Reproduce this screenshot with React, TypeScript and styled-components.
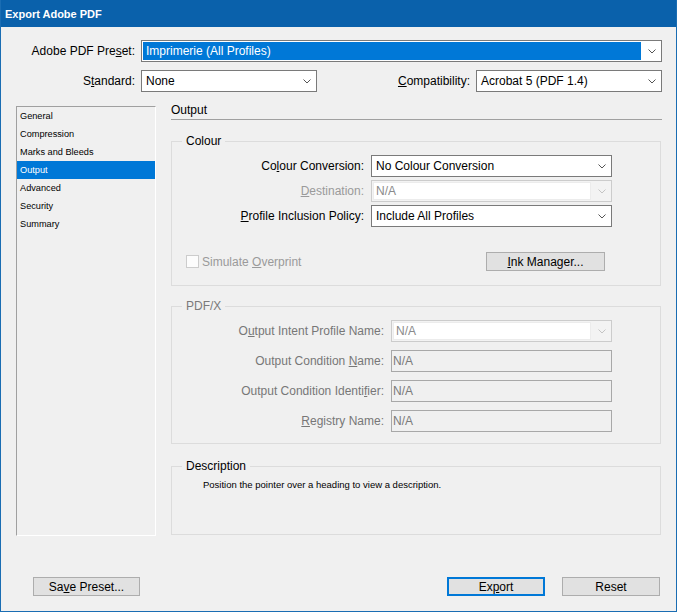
import styled, { createGlobalStyle } from 'styled-components';

const GlobalStyle = createGlobalStyle`
  html, body {
    margin: 0;
    padding: 0;
    background: #f0f0f0;
  }
  body {
    font-family: 'Liberation Sans', Arial, sans-serif;
    font-size: 12px;
    color: #000;
  }
  * {
    box-sizing: border-box;
  }
`;

const Window = styled.div`
  width: 677px;
  height: 612px;
  display: flex;
  flex-direction: column;
  background: #f0f0f0;
  border: 1px solid #1a6db3;
  border-top: none;
  overflow: hidden;
`;

const TitleBar = styled.div`
  height: 27px;
  flex: none;
  display: flex;
  align-items: center;
  padding-left: 4px;
  background: #0a61ab;
  color: #fff;
  font-size: 11px;
  font-weight: bold;
`;

const Body = styled.div`
  flex: 1;
  display: flex;
  flex-direction: column;
  padding: 13px 14px 0 0;
`;

const Row = styled.div<{ $top?: number }>`
  display: flex;
  align-items: center;
  height: 22px;
  margin-top: ${(p) => p.$top ?? 0}px;
`;

const Label = styled.span<{ $width?: number; $tone?: string; $gap?: number }>`
  flex: none;
  width: ${(p) => (p.$width ? `${p.$width}px` : 'auto')};
  margin-left: ${(p) => (p.$width ? '0' : 'auto')};
  margin-right: ${(p) => p.$gap ?? 6}px;
  text-align: right;
  white-space: nowrap;
  color: ${(p) => p.$tone ?? '#000'};
`;

const U = styled.span`
  text-decoration: underline;
  text-underline-offset: 1px;
`;

const ComboBox = styled.div<{ $width?: number; $disabled?: boolean }>`
  display: flex;
  align-items: stretch;
  height: 22px;
  flex: ${(p) => (p.$width ? 'none' : '1')};
  width: ${(p) => (p.$width ? `${p.$width}px` : 'auto')};
  border: 1px solid ${(p) => (p.$disabled ? '#cccccc' : '#7a7a7a')};
  background: ${(p) => (p.$disabled ? '#f3f3f3' : '#fff')};
`;

const ComboText = styled.div<{ $highlight?: boolean; $disabled?: boolean }>`
  flex: 1;
  display: flex;
  align-items: center;
  margin: 1px;
  padding-left: 2px;
  white-space: nowrap;
  background: ${(p) => (p.$highlight ? '#0078d7' : p.$disabled ? '#fff' : 'transparent')};
  color: ${(p) => (p.$highlight ? '#fff' : p.$disabled ? '#8a8a8a' : '#000')};
  border: 1px solid ${(p) => (p.$disabled ? '#ececec' : 'transparent')};
`;

const ChevronBox = styled.div`
  flex: none;
  width: 19px;
  display: flex;
  align-items: center;
  justify-content: center;
`;

const TextField = styled.div`
  width: 221px;
  height: 22px;
  display: flex;
  align-items: center;
  padding-left: 1px;
  border: 1px solid #a8a8a8;
  background: #f0f0f0;
  color: #7a7a7a;
`;

function Chevron({ disabled }: { disabled?: boolean }) {
  return (
    <svg width="8" height="5" viewBox="0 0 8 5">
      <path d="M0.5 0.5 L4 4 L7.5 0.5" fill="none" stroke={disabled ? '#c4c4c4' : '#555'} strokeWidth="1" />
    </svg>
  );
}

function Combo({
  value,
  width,
  highlight,
  disabled,
}: {
  value: string;
  width?: number;
  highlight?: boolean;
  disabled?: boolean;
}) {
  return (
    <ComboBox $width={width} $disabled={disabled}>
      <ComboText $highlight={highlight} $disabled={disabled}>
        {value}
      </ComboText>
      <ChevronBox>
        <Chevron disabled={disabled} />
      </ChevronBox>
    </ComboBox>
  );
}

const Main = styled.div`
  display: flex;
  align-items: flex-start;
  margin-top: 14px;
  padding-left: 15px;
`;

const NavList = styled.div`
  flex: none;
  width: 140px;
  height: 430px;
  border-top: 1px solid #a0a0a0;
  border-left: 1px solid #a0a0a0;
  border-right: 1px solid #fff;
  border-bottom: 1px solid #fff;
  font-size: 9.2px;
`;

const NavItem = styled.div<{ $selected?: boolean }>`
  height: 18px;
  line-height: 18px;
  padding-left: 3px;
  background: ${(p) => (p.$selected ? '#0078d7' : 'transparent')};
  color: ${(p) => (p.$selected ? '#fff' : '#000')};
`;

const Panel = styled.div`
  flex: 1;
  margin-left: 15px;
  margin-top: -3px;
`;

const PanelHeader = styled.div`
  height: 17px;
  line-height: 14px;
  border-bottom: 1px solid #a0a0a0;
`;

const Group = styled.fieldset<{ $top: number; $pad: string }>`
  margin: ${(p) => p.$top}px 1px 0 0;
  padding: ${(p) => p.$pad};
  min-width: 0;
  border: 1px solid #dcdcdc;
`;

const Legend = styled.legend<{ $tone?: string }>`
  margin-left: 10px;
  padding: 0 4px;
  line-height: 14px;
  font-size: 12px;
  color: ${(p) => p.$tone ?? '#000'};
`;

const FormRow = styled.div<{ $label: number; $gap?: number }>`
  display: grid;
  grid-template-columns: ${(p) => p.$label}px auto;
  column-gap: 7px;
  align-items: center;
  height: 22px;
  margin-top: ${(p) => p.$gap ?? 0}px;
  & > span {
    margin: 0;
  }
`;

const OptionsRow = styled.div`
  display: flex;
  align-items: center;
  justify-content: space-between;
  height: 19px;
  margin-top: 25px;
  padding: 0 55px 0 14px;
`;

const CheckLabel = styled.label`
  display: flex;
  align-items: center;
  gap: 3px;
  color: #9a9a9a;
`;

const CheckBox = styled.span`
  width: 13px;
  height: 13px;
  border: 1px solid #cccccc;
  background: #fcfcfc;
`;

const Button = styled.button<{ $width: number; $default?: boolean }>`
  width: ${(p) => p.$width}px;
  height: 19px;
  padding: 0;
  font-family: inherit;
  font-size: 12px;
  color: #000;
  background: #e1e1e1;
  border: ${(p) => (p.$default ? '2px solid #0078d7' : '1px solid #adadad')};
`;

const DescText = styled.div`
  padding-left: 31px;
  padding-top: 6px;
  font-size: 9.5px;
  line-height: 12px;
`;

const Footer = styled.div`
  display: flex;
  align-items: center;
  margin-top: 41px;
  padding: 0 2px 0 32px;
  gap: 17px;
  & > :nth-child(2) {
    margin-left: auto;
  }
`;

const navItems = ['General', 'Compression', 'Marks and Bleeds', 'Output', 'Advanced', 'Security', 'Summary'];

export default function App() {
  return (
    <>
      <GlobalStyle />
      <Window>
        <TitleBar>Export Adobe PDF</TitleBar>
        <Body>
          <Row>
            <Label $width={134}>
              Adobe PDF Pre<U>s</U>et:
            </Label>
            <Combo value="Imprimerie (All Profiles)" highlight />
          </Row>
          <Row $top={8}>
            <Label $width={134}>
              S<U>t</U>andard:
            </Label>
            <Combo value="None" width={176} />
            <Label>
              <U>C</U>ompatibility:
            </Label>
            <Combo value="Acrobat 5 (PDF 1.4)" width={186} />
          </Row>

          <Main>
            <NavList>
              {navItems.map((item) => (
                <NavItem key={item} $selected={item === 'Output'}>
                  {item}
                </NavItem>
              ))}
            </NavList>

            <Panel>
              <PanelHeader>Output</PanelHeader>

              <Group $top={14} $pad="7px 0 14px 0">
                <Legend>Colour</Legend>
                <FormRow $label={192}>
                  <Label>
                    Co<U>l</U>our Conversion:
                  </Label>
                  <Combo value="No Colour Conversion" width={241} />
                </FormRow>
                <FormRow $label={192} $gap={3}>
                  <Label $tone="#9a9a9a">
                    <U>D</U>estination:
                  </Label>
                  <Combo value="N/A" width={241} disabled />
                </FormRow>
                <FormRow $label={192} $gap={3}>
                  <Label>
                    <U>P</U>rofile Inclusion Policy:
                  </Label>
                  <Combo value="Include All Profiles" width={241} />
                </FormRow>
                <OptionsRow>
                  <CheckLabel>
                    <CheckBox />
                    <span>
                      Simulate <U>O</U>verprint
                    </span>
                  </CheckLabel>
                  <Button $width={119}>
                    <U>I</U>nk Manager...
                  </Button>
                </OptionsRow>
              </Group>

              <Group $top={13} $pad="7px 0 11px 0">
                <Legend $tone="#7a7a7a">PDF/X</Legend>
                <FormRow $label={212}>
                  <Label $tone="#777">
                    O<U>u</U>tput Intent Profile Name:
                  </Label>
                  <Combo value="N/A" width={221} disabled />
                </FormRow>
                <FormRow $label={212} $gap={8}>
                  <Label $tone="#777">
                    Output Condition <U>N</U>ame:
                  </Label>
                  <TextField>N/A</TextField>
                </FormRow>
                <FormRow $label={212} $gap={8}>
                  <Label $tone="#777">
                    Output Condition Identi<U>f</U>ier:
                  </Label>
                  <TextField>N/A</TextField>
                </FormRow>
                <FormRow $label={212} $gap={8}>
                  <Label $tone="#777">
                    <U>R</U>egistry Name:
                  </Label>
                  <TextField>N/A</TextField>
                </FormRow>
              </Group>

              <Group $top={15} $pad="0 0 43px 0">
                <Legend>Description</Legend>
                <DescText>Position the pointer over a heading to view a description.</DescText>
              </Group>
            </Panel>
          </Main>

          <Footer>
            <Button $width={107}>
              Sa<U>v</U>e Preset...
            </Button>
            <Button $width={98} $default>
              Ex<U>p</U>ort
            </Button>
            <Button $width={98}>Reset</Button>
          </Footer>
        </Body>
      </Window>
    </>
  );
}
